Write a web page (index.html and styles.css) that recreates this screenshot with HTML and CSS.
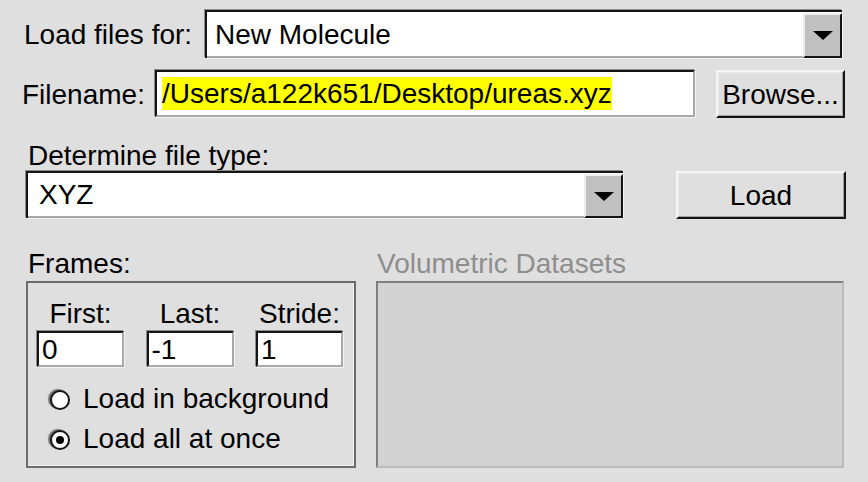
FILE: index.html
```
<!DOCTYPE html>
<html>
<head>
<meta charset="utf-8">
<link rel="stylesheet" href="styles.css">
</head>
<body>
<div class="dialog">
  <div class="row row-target">
    <span class="lbl lbl-target">Load files for:</span>
    <div class="combo combo-target">
      <span class="combo-text">New Molecule</span>
      <span class="combo-arrow"><span class="tri"></span></span>
    </div>
  </div>
  <div class="row row-file">
    <span class="lbl lbl-file">Filename:</span>
    <div class="entry entry-file"><span class="sel">/Users/a122k651/Desktop/ureas.xyz</span></div>
    <button class="btn btn-browse">Browse...</button>
  </div>
  <div class="type-label">Determine file type:</div>
  <div class="row row-type">
    <div class="combo combo-type">
      <span class="combo-text">XYZ</span>
      <span class="combo-arrow"><span class="tri"></span></span>
    </div>
    <button class="btn btn-load">Load</button>
  </div>
  <div class="bottom">
    <div class="frames-col">
      <div class="sec-label">Frames:</div>
      <div class="frames-box">
        <div class="frame-fields">
          <div class="field"><span class="field-lbl">First:</span><div class="entry entry-small">0</div></div>
          <div class="field"><span class="field-lbl">Last:</span><div class="entry entry-small">-1</div></div>
          <div class="field"><span class="field-lbl">Stride:</span><div class="entry entry-small">1</div></div>
        </div>
        <div class="radios">
          <div class="radio-row"><span class="radio"></span>Load in background</div>
          <div class="radio-row"><span class="radio radio-on"></span>Load all at once</div>
        </div>
      </div>
    </div>
    <div class="vol-col">
      <div class="sec-label sec-disabled">Volumetric Datasets</div>
      <div class="vol-box"></div>
    </div>
  </div>
</div>
</body>
</html>
```

FILE: styles.css
```
html, body {
  margin: 0;
  padding: 0;
}
body {
  background: #dfdfdf;
  font-family: "Liberation Sans", Arial, sans-serif;
  font-size: 28px;
  line-height: 31px;
  color: #000;
  width: 868px;
  height: 482px;
  overflow: hidden;
}
.dialog {
  display: flex;
  flex-direction: column;
}
.row {
  display: flex;
  align-items: center;
}
.row-target {
  margin-top: 10px;
  height: 48px;
  padding-left: 24px;
}
.lbl-target {
  width: 181px;
}
.combo {
  display: flex;
  box-sizing: border-box;
  background: #fff;
  border-top: 2px solid #141414;
  border-left: 2px solid #141414;
  box-shadow: -1px -1px 0 #8c8c8c, 1px 1px 0 #f3f3f3;
}
.combo-target {
  width: 637px;
  height: 48px;
}
.combo-text {
  flex: 1;
  display: flex;
  align-items: center;
  background: #fff;
  border-bottom: 2px solid #a9a9a9;
  padding-left: 8px;
}
.combo-type .combo-text {
  padding-left: 11px;
}
.combo-arrow {
  width: 39px;
  margin-top: 1px;
  box-sizing: border-box;
  background: #c0c0c0;
  border: 2px solid;
  border-color: #eeeeee #141414 #141414 #eeeeee;
  display: flex;
  align-items: center;
  justify-content: center;
}
.tri {
  width: 0;
  height: 0;
  border-left: 10px solid transparent;
  border-right: 10px solid transparent;
  border-top: 9px solid #000;
}
.row-file {
  margin-top: 12px;
  height: 48px;
  padding-left: 22px;
}
.lbl-file {
  width: 133px;
}
.entry {
  box-sizing: border-box;
  background: #fff;
  border: 2px solid;
  border-color: #141414 #a9a9a9 #a9a9a9 #141414;
  box-shadow: -1px -1px 0 #8c8c8c, 1px 1px 0 #f3f3f3;
  display: flex;
  align-items: center;
}
.entry-file {
  width: 540px;
  height: 47px;
  align-self: flex-start;
  padding-left: 5px;
}
.sel {
  background: #ffff00;
  line-height: 33px;
}
.btn {
  font: inherit;
  line-height: 31px;
  color: #000;
  box-sizing: border-box;
  background: #dfdfdf;
  border: 2px solid;
  border-color: #f5f5f5 #141414 #141414 #f5f5f5;
  box-shadow: inset -1px -1px 0 #a3a3a3, inset 1px 1px 0 #e9e9e9;
  padding: 0;
  margin: 0;
}
.btn-browse {
  margin-left: 21px;
  width: 129px;
  height: 48px;
}
.type-label {
  margin-top: 22px;
  padding-left: 28px;
}
.row-type {
  padding-left: 26px;
  height: 48px;
  align-items: flex-start;
}
.combo-type {
  width: 597px;
  height: 47px;
}
.btn-load {
  margin-left: 53px;
  width: 170px;
  height: 48px;
}
.bottom {
  display: flex;
  margin-top: 29px;
  padding-left: 26px;
}
.frames-col {
  width: 330px;
}
.vol-col {
  width: 468px;
  margin-left: 20px;
}
.sec-label {
  height: 33px;
  padding-left: 2px;
}
.sec-disabled {
  color: #8e8e8e;
  padding-left: 1px;
}
.frames-box {
  box-sizing: border-box;
  height: 187px;
  border: 2px solid #6b6b6b;
  box-shadow: inset -1px -1px 0 #f2f2f2;
}
.frame-fields {
  display: flex;
  justify-content: space-between;
  padding: 15px 11px 0 9px;
}
.field {
  display: flex;
  flex-direction: column;
  align-items: center;
  width: 87px;
}
.field-lbl {
  margin-bottom: 2px;
}
.entry-small {
  width: 87px;
  height: 36px;
  padding-left: 3px;
}
.radios {
  margin-top: 11px;
}
.radio-row {
  display: flex;
  align-items: center;
  height: 40px;
  padding-left: 22px;
}
.radio {
  box-sizing: border-box;
  width: 20px;
  height: 20px;
  margin-top: 3px;
  margin-right: 13px;
  border-radius: 50%;
  background: #fff;
  border: 2px solid #141414;
  box-shadow: -2px -1px 1px #6f6f6f;
  display: flex;
  align-items: center;
  justify-content: center;
}
.radio-on::after {
  content: "";
  width: 8px;
  height: 8px;
  border-radius: 50%;
  background: #000;
}
.vol-box {
  box-sizing: border-box;
  height: 187px;
  background: #d3d3d3;
  border: 2px solid;
  border-color: #7f7f7f #bcbcbc #bcbcbc #7f7f7f;
}
```
